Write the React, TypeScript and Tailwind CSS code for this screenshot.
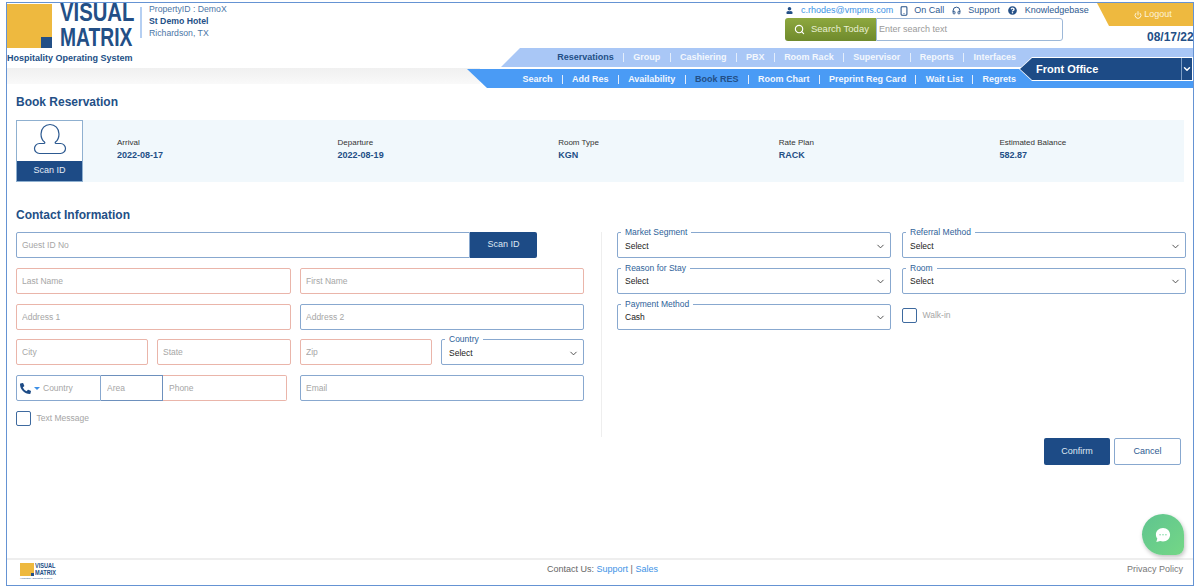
import { ChevronDown, Headphones, Power, Search, Smartphone } from 'lucide-react'
import { FaPhoneAlt, FaQuestionCircle, FaUser } from 'react-icons/fa'

const primaryNav = ['Reservations', 'Group', 'Cashiering', 'PBX', 'Room Rack', 'Supervisor', 'Reports', 'Interfaces']
const secondaryNav = ['Search', 'Add Res', 'Availability', 'Book RES', 'Room Chart', 'Preprint Reg Card', 'Wait List', 'Regrets']

const summary = [
  { label: 'Arrival', value: '2022-08-17' },
  { label: 'Departure', value: '2022-08-19' },
  { label: 'Room Type', value: 'KGN' },
  { label: 'Rate Plan', value: 'RACK' },
  { label: 'Estimated Balance', value: '582.87' },
]

export default function App() {
  return (
    <div className="h-[588px] w-[1200px] overflow-hidden bg-white px-[6px] pt-[2px] font-['Liberation_Sans',Arial,sans-serif]">
      <div className="relative flex h-[584px] flex-col overflow-hidden border-[1.5px] border-[#6593d3] bg-white">
        <Header />
        <main className="flex-1 px-[9px]">
          <h1 className="mt-[6px] h-[16px] text-[12px] leading-[16px] font-bold text-[#234f86]">Book Reservation</h1>
          <SummaryBanner />
          <h2 className="mt-[25px] h-[16px] text-[12px] leading-[16px] font-bold text-[#234f86]">Contact Information</h2>
          <ContactForm />
        </main>
        <Footer />
        <button className="absolute top-[511px] right-[9px] flex h-[41px] w-[42px] items-center justify-center rounded-[50%_50%_8px_50%] bg-gradient-to-br from-[#5fc48f] to-[#74d786] shadow-[1px_2px_4px_rgba(0,0,0,0.25)]">
          <svg viewBox="0 0 24 24" className="h-[20px] w-[20px]">
            <path d="M12 3.5c-5 0-8.5 3.6-8.5 8 0 1.9.6 3.5 1.7 4.8L4 20.5l4.6-1.3c1 .4 2.2.6 3.4.6 5 0 8.500-3.700 8.500-8.100s-3.500-8.200-8.500-8.200z" fill="#fff" />
            <circle cx="8.500" cy="11.700" r="0.900" fill="#7bd8a0" />
            <circle cx="12" cy="11.700" r="0.900" fill="#7bd8a0" />
            <circle cx="15.500" cy="11.700" r="0.900" fill="#7bd8a0" />
          </svg>
        </button>
      </div>
    </div>
  )
}

const Header = () => {
  return (
    <header className="relative flex h-[85px] shrink-0">
      <div className="w-[473px] shrink-0">
        <div className="flex h-[65px]">
          <Logo />
          <div className="mt-[4px] ml-[6px] h-[31px] w-[2px] bg-[#b5cff2]" />
          <div className="ml-[7px] text-[8.700px] leading-[12px] text-[#4c76a6]">
            <p>PropertyID : DemoX</p>
            <p className="font-bold text-[#234f86]">St Demo Hotel</p>
            <p>Richardson, TX</p>
          </div>
        </div>
        <div className="h-[16px] bg-gradient-to-b from-[#f0f0f0] to-[#f9f9f9]" />
      </div>

      <div className="min-w-0 flex-1">
        <div className="flex h-[45px] justify-end">
          <div className="mr-[7px] w-[305px]">
            <div className="flex h-[15px] items-center text-[9px] whitespace-nowrap text-[#2e5a91]">
              <FaUser className="ml-[1px] h-[7px] w-[7px] text-[#234f86]" />
              <span className="ml-[8px] text-[#3d93e6]">c.rhodes@vmpms.com</span>
              <Smartphone className="ml-[6px] h-[10px] w-[10px] text-[#234f86]" strokeWidth={2.5} />
              <span className="ml-[5px]">On Call</span>
              <Headphones className="ml-[8px] h-[9px] w-[9px] text-[#234f86]" strokeWidth={2.5} />
              <span className="ml-[7px]">Support</span>
              <FaQuestionCircle className="ml-[8px] h-[9px] w-[9px] text-[#234f86]" />
              <span className="ml-[8px]">Knowledgebase</span>
            </div>
            <div className="flex h-[23px] w-[278px]">
              <button className="flex w-[91px] items-center gap-[6px] rounded-l-[3px] bg-gradient-to-b from-[#8ea83f] to-[#6f8a2c] pl-[9px] text-[9.500px] whitespace-nowrap text-[#e8efd2]">
                <Search className="h-[11px] w-[11px] text-white" strokeWidth={2.5} />
                Search Today
              </button>
              <input
                placeholder="Enter search text"
                className="min-w-0 flex-1 rounded-r-[3px] border-[1.5px] border-[#9db8d8] bg-white px-[2px] text-[9px] outline-none placeholder:text-[#9a9a9a]"
              />
            </div>
          </div>
          <div className="w-[96px] shrink-0">
            <div className="flex h-[23px] items-center justify-center gap-[2px] bg-[#eeb93f] pl-[16px] text-[9px] text-[#fdf3d8] [clip-path:polygon(0_0,100%_0,100%_100%,12px_100%)]">
              <Power className="h-[8px] w-[8px]" strokeWidth={3} />
              Logout
            </div>
            <p className="mt-[3px] pl-[50px] text-[12px] leading-[16px] font-bold whitespace-nowrap text-[#234f86]">08/17/22</p>
          </div>
        </div>

        <nav className="ml-[21px] flex h-[19px] items-center justify-end bg-[#a9c7f6] pr-[177px] [clip-path:polygon(19px_0,100%_0,100%_100%,0_100%)]">
          <NavItems items={primaryNav} active="Reservations" />
        </nav>
        <nav className="mt-[2px] -ml-[13px] flex h-[19px] items-center justify-end bg-[#4a9bf5] pt-[2px] pr-[177px] [clip-path:polygon(0_0,100%_0,100%_100%,20px_100%)]">
          <NavItems items={secondaryNav} active="Book RES" />
        </nav>
      </div>

      <div className="absolute top-[54px] right-0 h-[24px] w-[174px] bg-white [clip-path:polygon(13px_0,100%_0,100%_100%,13px_100%,0_50%)]">
        <div className="m-[1px] flex h-[22px] bg-[#1d4b86] text-white [clip-path:polygon(12px_0,100%_0,100%_100%,12px_100%,0_50%)]">
          <span className="flex-1 pl-[16px] text-[11px] leading-[22px] font-bold">Front Office</span>
          <span className="flex w-[11px] items-center justify-center border-l border-[#7f9fc6]">
            <ChevronDown className="h-[10px] w-[10px] shrink-0" strokeWidth={3.5} />
          </span>
        </div>
      </div>
    </header>
  )
}

const Logo = () => {
  return (
    <div className="relative w-[127px] shrink-0">
      <div className="mt-[1px] flex">
        <div className="relative h-[44px] w-[45px] shrink-0 bg-[#eeb93f]">
          <div className="absolute right-0 bottom-0 h-[11px] w-[11px] bg-[#234f86]" />
        </div>
        <div className="ml-[8px] text-[26px] leading-[25px] font-bold text-[#234f86]">
          <p className="mt-[-4px] origin-left scale-x-[0.78]">VISUAL</p>
          <p className="origin-left scale-x-[0.74]">MATRIX</p>
        </div>
      </div>
      <p className="absolute top-[49px] left-0 text-[9px] leading-[12px] font-bold whitespace-nowrap text-[#234f86]">
        Hospitality Operating System
      </p>
    </div>
  )
}

const NavItems = ({ items, active }: { items: string[]; active: string }) => {
  return (
    <div className="flex items-center text-[9px] font-bold whitespace-nowrap text-[#f3f7fd]">
      {items.map((item, i) => (
        <div key={item} className="flex items-center">
          {i > 0 && <span className="mx-[9.300px] h-[9px] w-[1px] bg-[#e3edfb]" />}
          <span className={item === active ? 'text-[#234f86]' : ''}>{item}</span>
        </div>
      ))}
    </div>
  )
}

const SummaryBanner = () => {
  return (
    <section className="mt-[10px] flex h-[62px] bg-[#f1f8fc]">
      <div className="flex w-[67px] shrink-0 flex-col border border-[#8fb0d0] bg-white">
        <div className="flex flex-1 items-start justify-center pt-[2px]">
          <svg viewBox="0 0 34 32" className="h-[32px] w-[34px]" fill="none" stroke="#2d5a91" strokeWidth="1.200">
            <path d="M17 1.500c-5 0-9 4-9 9.500 0 3.500 1.500 6.500 3.500 8 .5.5.5 1.500-.5 1.500H6.500c-3 0-5 2.500-5 5s2 5 5 5h21c3 0 5-2.500 5-5s-2-5-5-5H23c-1 0-1-1-.5-1.500 2-1.500 3.500-4.500 3.500-8 0-5.500-4-9.500-9-9.500z" />
          </svg>
        </div>
        <div className="flex h-[20px] items-center justify-center bg-[#1d4b86] text-[9px] text-[#e4ecf6]">Scan ID</div>
      </div>
      <div className="ml-[34px] flex flex-1 items-start pt-[17px]">
        {summary.map((item) => (
          <div key={item.label} className="w-[220.600px] shrink-0 leading-[12px]">
            <p className="text-[8px] text-[#333]">{item.label}</p>
            <p className="text-[9px] font-bold text-[#234f86]">{item.value}</p>
          </div>
        ))}
      </div>
    </section>
  )
}

const inputBase =
  'h-full min-w-0 rounded-[2px] border-[1.5px] bg-white px-[5px] text-[8.500px] outline-none placeholder:text-[#a6a6a6]'
const blueBorder = 'border-[#88a8cf]'
const redBorder = 'border-[#eab5aa]'

const ContactForm = () => {
  return (
    <div className="mt-[9px] flex">
      <div className="flex w-[568px] shrink-0 flex-col gap-[9.750px]">
        <div className="flex h-[26px] w-[521px]">
          <input placeholder="Guest ID No" className={`${inputBase} ${blueBorder} flex-1 rounded-r-none`} />
          <button className="w-[67px] shrink-0 rounded-r-[2px] bg-[#1d4b86] text-[9px] text-[#dfe8f3]">Scan ID</button>
        </div>
        <div className="flex h-[26px] gap-[9px]">
          <input placeholder="Last Name" className={`${inputBase} ${redBorder} w-[275px]`} />
          <input placeholder="First Name" className={`${inputBase} ${redBorder} flex-1`} />
        </div>
        <div className="flex h-[26px] gap-[9px]">
          <input placeholder="Address 1" className={`${inputBase} ${redBorder} w-[275px]`} />
          <input placeholder="Address 2" className={`${inputBase} ${blueBorder} flex-1`} />
        </div>
        <div className="flex h-[26px] gap-[9px]">
          <input placeholder="City" className={`${inputBase} ${redBorder} w-[132px]`} />
          <input placeholder="State" className={`${inputBase} ${redBorder} w-[134px]`} />
          <input placeholder="Zip" className={`${inputBase} ${redBorder} w-[132px]`} />
          <div className="flex-1">
            <SelectField label="Country" value="Select" />
          </div>
        </div>
        <div className="flex h-[26px] gap-[13px]">
          <div className="flex w-[271px]">
            <div className={`flex w-[85px] items-center rounded-l-[2px] border-[1.5px] ${blueBorder} pl-[3px] text-[8.500px] text-[#a6a6a6]`}>
              <FaPhoneAlt className="h-[11px] w-[11px] text-[#1d4b86]" />
              <span className="mx-[3px] h-0 w-0 border-x-[3px] border-t-[3px] border-x-transparent border-t-[#3d8fe6]" />
              Country
            </div>
            <input placeholder="Area" className={`${inputBase} w-[62px] rounded-none border-l-0 border-[#6d90bd] pl-[6px]`} />
            <input placeholder="Phone" className={`${inputBase} ${redBorder} flex-1 rounded-l-none border-l-0 pl-[6px]`} />
          </div>
          <input placeholder="Email" className={`${inputBase} ${blueBorder} flex-1`} />
        </div>
        <CheckField label="Text Message" />
      </div>

      <div className="mr-[15px] ml-[17px] h-[205px] w-[1px] shrink-0 bg-[#eeeeee]" />

      <div className="grid flex-1 grid-cols-[274px_284px] content-start gap-x-[11px] gap-y-[9.750px]">
        <div className="h-[26px]"><SelectField label="Market Segment" value="Select" /></div>
        <div className="h-[26px]"><SelectField label="Referral Method" value="Select" /></div>
        <div className="h-[26px]"><SelectField label="Reason for Stay" value="Select" /></div>
        <div className="h-[26px]"><SelectField label="Room" value="Select" /></div>
        <div className="h-[26px]"><SelectField label="Payment Method" value="Cash" /></div>
        <div className="flex h-[26px] items-center pb-[2px]"><CheckField label="Walk-in" /></div>
        <div className="col-span-2 mt-[99px] mr-[5px] flex justify-end gap-[4px]">
          <button className="h-[27px] w-[66px] rounded-[2px] bg-[#1d4b86] text-[9px] text-[#dfe8f3]">Confirm</button>
          <button className={`h-[27px] w-[67px] rounded-[2px] border-[1.5px] ${blueBorder} bg-white text-[9px] text-[#2e5a91]`}>Cancel</button>
        </div>
      </div>
    </div>
  )
}

const SelectField = ({ label, value }: { label: string; value: string }) => {
  return (
    <div className={`relative flex h-full items-center justify-between rounded-[2px] border-[1.5px] ${blueBorder} bg-white pr-[4px] pl-[7px] text-[8.500px] text-[#222]`}>
      <span className="absolute -top-[6px] left-[3px] bg-white px-[4px] text-[8.500px] leading-[10px] whitespace-nowrap text-[#2e6299]">{label}</span>
      <span className="mt-[2px]">{value}</span>
      <ChevronDown className="mt-[2px] h-[11px] w-[11px] text-[#444]" strokeWidth={2} />
    </div>
  )
}

const CheckField = ({ label }: { label: string }) => {
  return (
    <div className="flex h-[15px] items-center gap-[5.500px]">
      <span className="h-[15px] w-[15px] rounded-[2px] border-[1.5px] border-[#3e6a9f] bg-white" />
      <span className="text-[8.500px] text-[#a5a5a5]">{label}</span>
    </div>
  )
}

const Footer = () => {
  return (
    <footer className="relative flex h-[27px] shrink-0 items-start justify-between border-t-2 border-[#eeeeee] pt-[3px] pr-[10px] pl-[13px]">
      <div className="flex h-[17px] flex-col">
        <div className="flex">
          <div className="relative h-[13px] w-[14px] bg-[#eeb93f]">
            <div className="absolute right-0 bottom-0 h-[3px] w-[3px] bg-[#234f86]" />
          </div>
          <div className="ml-[1px] text-[7px] leading-[6.500px] font-bold text-[#234f86]">
            <p className="origin-left scale-x-[0.8]">VISUAL</p>
            <p className="origin-left scale-x-[0.8]">MATRIX</p>
          </div>
        </div>
        <p className="mt-[1px] text-[2.500px] leading-[3px] whitespace-nowrap text-[#234f86]">Hospitality Operating System</p>
      </div>
      <p className="absolute top-[3px] left-[540px] text-[9px] text-[#666]">
        Contact Us: <span className="text-[#3d93e6]">Support</span> | <span className="text-[#3d93e6]">Sales</span>
      </p>
      <p className="text-[9px] text-[#777]">Privacy Policy</p>
    </footer>
  )
}
